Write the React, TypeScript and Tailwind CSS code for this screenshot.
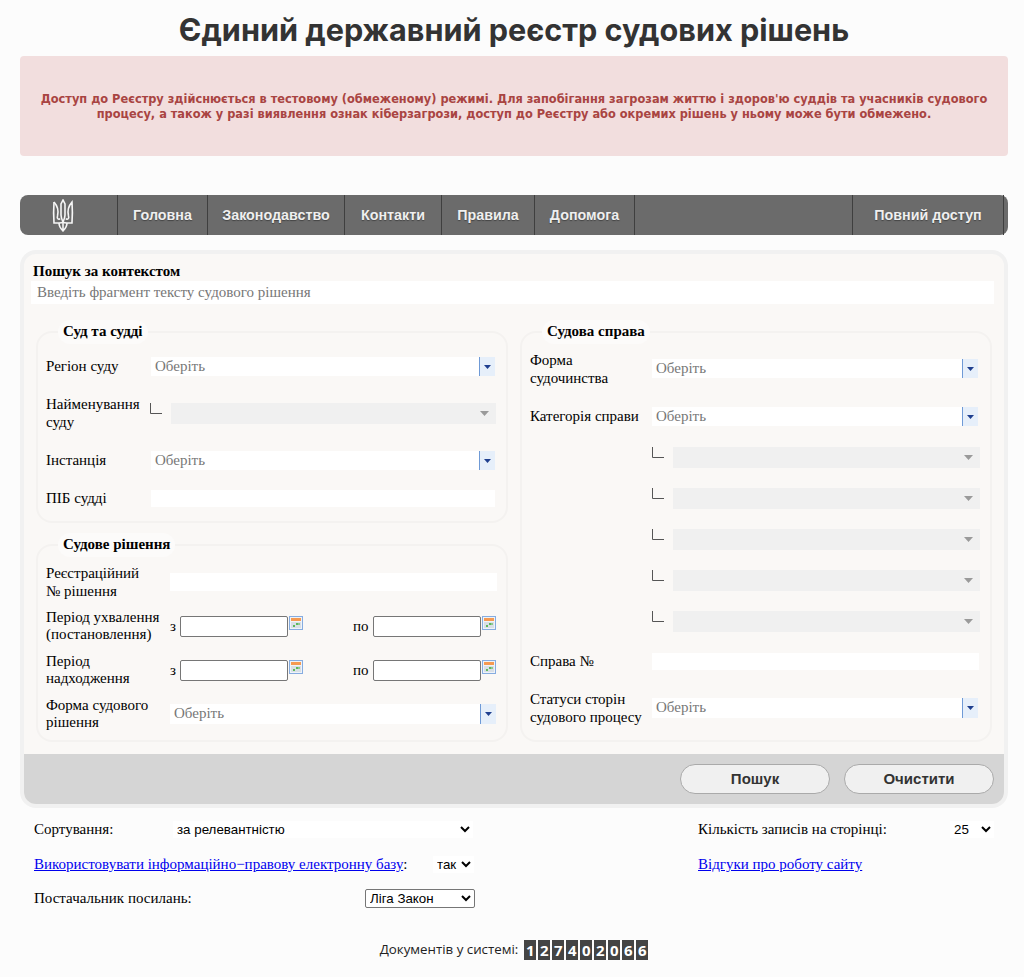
import React from "react";

const Corner = () => (
  <svg width="13" height="12" viewBox="0 0 13 12" className="-ml-[1px] shrink-0 self-start">
    <path d="M1.5 0V10.5H13" fill="none" stroke="#555" strokeWidth="1" />
  </svg>
);

const Cal = () => (
  <svg width="14" height="14" viewBox="0 0 14 14" className="-mt-[7px] ml-[1px] shrink-0">
    <rect x="0.5" y="0.5" width="13" height="13" fill="#eef3f8" stroke="#86ace0" />
    <rect x="2" y="2" width="10" height="3" fill="#f59a52" />
    <rect x="2" y="6" width="10" height="6" fill="#d9dfe6" />
    <rect x="4" y="9" width="2" height="2" fill="#5cb85c" />
    <rect x="7" y="7" width="2" height="2" fill="#5cb85c" />
    <rect x="9" y="7" width="2" height="2" fill="#8fc98f" />
  </svg>
);

const Pick = ({ c }: { c: string }) => (
  <div className={`flex items-stretch bg-white text-[#777] ${c}`}>
    <span className="flex flex-1 items-center pl-[4px]">Оберіть</span>
    <span className="flex w-[16px] items-center justify-center border-l border-[#6f9ad6] bg-[#e6effa]">
      <svg width="7" height="4" viewBox="0 0 7 4"><path d="M0 0H7L3.5 4Z" fill="#1f3f8f" /></svg>
    </span>
  </div>
);

const Disabled = ({ w }: { w: string }) => (
  <div className={`flex h-[21px] items-center justify-end bg-[#f0f0f0] pr-[7px] ${w}`}>
    <svg width="9" height="5" viewBox="0 0 9 5"><path d="M0 0H9L4.5 5Z" fill="#9a9a9a" /></svg>
  </div>
);

const Field = ({ w }: { w: string }) => <div className={`bg-white ${w}`} />;

const DateBox = () => (
  <input className="h-[21px] w-[108px] rounded-[2px] border border-[#767676] bg-white" />
);

const Trident = () => (
  <svg width="22" height="33" viewBox="0 0 22 33" fill="none" stroke="#f6f6f6" strokeWidth="1.6">
    <path d="M11 1L9 5V16C9 19 10 21 11 23C12 21 13 19 13 16V5Z" />
    <path d="M2 3C1.5 10 1.5 17 2 24H7C8.5 24 10 24 11 23C12 24 13.5 24 15 24H20C20.5 17 20.5 10 20 3C15.5 8 15.5 13 16.5 17C17.5 20 15 21 14 19.5" />
    <path d="M2 3C6.5 8 6.5 13 5.5 17C4.5 20 7 21 8 19.5" />
    <path d="M7 24C7 28 9 30 11 32C13 30 15 28 15 24M11 24V32" />
  </svg>
);

const NavItem = ({ w, children }: { w: string; children?: React.ReactNode }) => (
  <div className={`flex h-full items-center justify-center border-r border-[#3f3f3f] pt-[1px] ${w}`}>{children}</div>
);

const Legend = ({ children }: { children: React.ReactNode }) => (
  <legend className="ml-[12px] h-[24px] rounded-[12px] bg-[#fcfbfa] px-[5px] text-[15px] font-bold leading-[22px]">
    {children}
  </legend>
);

const fs = "rounded-[16px] border-2 border-[#f4f2f0] px-[8px]";

export default function App() {
  return (
    <div className="min-h-[977px] bg-[#fcfcfc] pl-[20px] pr-[16px] font-['Liberation_Serif',serif] text-[15px] text-black">
      <h1 className="pt-[9px] text-center font-['Inter',sans-serif] text-[30.6px] font-bold leading-[42px] text-[#333]">
        Єдиний державний реєстр судових рішень
      </h1>
      <div className="mt-[5px] flex h-[100px] items-center justify-center rounded-[4px] bg-[#f2dede] px-[16px] text-center font-['DejaVu_Sans_Condensed','DejaVu_Sans',sans-serif] text-[12.65px] font-bold leading-[15px] text-[#a94442]">
        Доступ до Реєстру здійснюється в тестовому (обмеженому) режимі. Для запобігання загрозам життю і здоров'ю суддів та учасників судового процесу, а також у разі виявлення ознак кіберзагрози, доступ до Реєстру або окремих рішень у ньому може бути обмежено.
      </div>

      <nav className="mt-[39px] flex h-[40px] rounded-[8px] bg-[#6b6b6b] font-['Liberation_Sans',sans-serif] text-[14.3px] font-bold text-[#efefef] [text-shadow:0_1px_1px_#444]">
        <NavItem w="w-[98px] pr-[12px]"><Trident /></NavItem>
        <NavItem w="w-[90px]">Головна</NavItem>
        <NavItem w="w-[137px]">Законодавство</NavItem>
        <NavItem w="w-[97px]">Контакти</NavItem>
        <NavItem w="w-[93px]">Правила</NavItem>
        <NavItem w="w-[100px]">Допомога</NavItem>
        <NavItem w="w-[218px]" />
        <NavItem w="w-[151px]">Повний доступ</NavItem>
      </nav>

      <main className="mt-[15px] h-[558px] rounded-[16px] border-4 border-[#f1f1f1] bg-[#faf8f6]">
        <div className="h-[500px] pl-[7px] pr-[10px]">
          <div className="pl-[2px] pt-[9px] font-bold leading-[16px]">Пошук за контекстом</div>
          <input
            className="mt-[2px] block h-[23px] w-full bg-white pl-[6px] placeholder:text-[#777]"
            placeholder="Введіть фрагмент тексту судового рішення"
          />
          <div className="mt-[16px] flex gap-[12px] pl-[5px]">
            <div className="w-[472px]">
              <fieldset className={`h-[203px] ${fs}`}>
                <Legend>Суд та судді</Legend>
                <div className="mt-[13px] flex h-[19px] items-center">
                  <div className="w-[105px]">Регіон суду</div>
                  <Pick c="h-[19px] w-[344px]" />
                </div>
                <div className="mt-[19px] flex h-[36px] items-center">
                  <div className="w-[104px] leading-[18px]">Найменування суду</div>
                  <div className="flex w-[346px] items-start justify-between">
                    <Corner />
                    <Disabled w="w-[325px]" />
                  </div>
                </div>
                <div className="mt-[20px] flex h-[19px] items-center">
                  <div className="w-[105px]">Інстанція</div>
                  <Pick c="h-[19px] w-[344px]" />
                </div>
                <div className="mt-[20px] flex h-[17px] items-center">
                  <div className="w-[105px]">ПІБ судді</div>
                  <Field w="h-[17px] w-[344px]" />
                </div>
              </fieldset>

              <fieldset className={`mt-[10px] h-[209px] ${fs}`}>
                <Legend>Судове рішення</Legend>
                <div className="mt-[7px] flex h-[36px] items-center">
                  <div className="w-[124px] leading-[18px]">Реєстраційний<br />№ рішення</div>
                  <Field w="h-[18px] w-[327px]" />
                </div>
                <div className="mt-[8px] flex h-[36px] items-center">
                  <div className="w-[124px] leading-[17px]">Період ухвалення (постановлення)</div>
                  <div className="w-[10px]">з</div>
                  <DateBox />
                  <Cal />
                  <div className="ml-[50px] w-[20px]">по</div>
                  <DateBox />
                  <Cal />
                </div>
                <div className="mt-[8px] flex h-[36px] items-center">
                  <div className="w-[124px] leading-[17px]">Період надходження</div>
                  <div className="w-[10px]">з</div>
                  <DateBox />
                  <Cal />
                  <div className="ml-[50px] w-[20px]">по</div>
                  <DateBox />
                  <Cal />
                </div>
                <div className="mt-[8px] flex h-[36px] items-center">
                  <div className="w-[124px] leading-[17px]">Форма судового рішення</div>
                  <Pick c="-mt-[1px] h-[20px] w-[326px]" />
                </div>
              </fieldset>
            </div>

            <fieldset className={`h-[422px] w-[472px] ${fs}`}>
              <Legend>Судова справа</Legend>
              <div className="mt-[7px] flex h-[36px] items-center">
                <div className="w-[122px] leading-[18px]">Форма судочинства</div>
                <Pick c="-mt-[1px] h-[19px] w-[326px]" />
              </div>
              <div className="mt-[20px] flex h-[19px] items-center">
                <div className="w-[122px]">Категорія справи</div>
                <Pick c="h-[19px] w-[326px]" />
              </div>
              <div className="ml-[122px] mt-[21px] flex w-[328px] justify-between"><Corner /><Disabled w="w-[307px]" /></div>
              <div className="ml-[122px] mt-[20px] flex w-[328px] justify-between"><Corner /><Disabled w="w-[307px]" /></div>
              <div className="ml-[122px] mt-[20px] flex w-[328px] justify-between"><Corner /><Disabled w="w-[307px]" /></div>
              <div className="ml-[122px] mt-[20px] flex w-[328px] justify-between"><Corner /><Disabled w="w-[307px]" /></div>
              <div className="ml-[122px] mt-[20px] flex w-[328px] justify-between"><Corner /><Disabled w="w-[307px]" /></div>
              <div className="mt-[21px] flex h-[17px] items-center">
                <div className="w-[122px]">Справа №</div>
                <Field w="h-[17px] w-[327px]" />
              </div>
              <div className="mt-[20px] flex h-[36px] items-center">
                <div className="w-[122px] leading-[18px]">Статуси сторін судового процесу</div>
                <Pick c="-mt-[1px] h-[20px] w-[326px]" />
              </div>
            </fieldset>
          </div>
        </div>
        <div className="flex h-[50px] items-center justify-end gap-[14px] rounded-b-[12px] bg-[#d5d5d5] pr-[10px] font-['Liberation_Sans',sans-serif] text-[15px] font-bold text-[#333]">
          <button className="h-[30px] w-[150px] rounded-[15px] border border-[#aaa] bg-[#f0f0f0]">Пошук</button>
          <button className="h-[30px] w-[150px] rounded-[15px] border border-[#aaa] bg-[#f0f0f0]">Очистити</button>
        </div>
      </main>

      <section className="pl-[14px] pr-[14px]">
        <div className="mt-[13px] flex h-[17px] items-center justify-between">
          <div className="flex w-[441px] items-center">
            <div className="w-[139px]">Сортування:</div>
            <select className="h-[17px] w-[300px] bg-white font-['Liberation_Sans',sans-serif] text-[13.33px]" defaultValue="r">
              <option value="r">за релевантністю</option>
            </select>
          </div>
          <div className="flex w-[296px] items-center justify-between">
            <div>Кількість записів на сторінці:</div>
            <select className="h-[17px] w-[44px] bg-white font-['Liberation_Sans',sans-serif] text-[13.33px]" defaultValue="25">
              <option value="25">25</option>
            </select>
          </div>
        </div>
        <div className="mt-[18px] flex h-[17px] items-center justify-between">
          <div className="flex w-[441px] items-center justify-between">
            <div><a href="#" className="text-[#0000ee] underline">Використовувати інформаційно−правову електронну базу</a>:</div>
            <select className="mr-[1px] h-[17px] w-[41px] bg-white font-['Liberation_Sans',sans-serif] text-[13.33px]" defaultValue="y">
              <option value="y">так</option>
            </select>
          </div>
          <div className="w-[296px]"><a href="#" className="text-[#0000ee] underline">Відгуки про роботу сайту</a></div>
        </div>
        <div className="mt-[16px] flex h-[19px] w-[441px] items-center justify-between">
          <div>Постачальник посилань:</div>
          <select className="h-[19px] w-[110px] rounded-[2px] border border-[#767676] bg-white font-['Liberation_Sans',sans-serif] text-[13.33px]" defaultValue="l">
            <option value="l">Ліга Закон</option>
          </select>
        </div>
      </section>

      <div className="mt-[32px] flex h-[20px] items-center justify-center font-['Open_Sans',sans-serif] text-[13.3px] text-[#222]">
        <span>Документів у системі:</span>
        <span className="ml-[6px] flex gap-[2px]">
          {"127402066".split("").map((d, i) => (
            <span key={i} className="flex h-[20px] w-[12px] items-center justify-center bg-[#444] text-[15px] font-bold text-white">{d}</span>
          ))}
        </span>
      </div>
    </div>
  );
}
